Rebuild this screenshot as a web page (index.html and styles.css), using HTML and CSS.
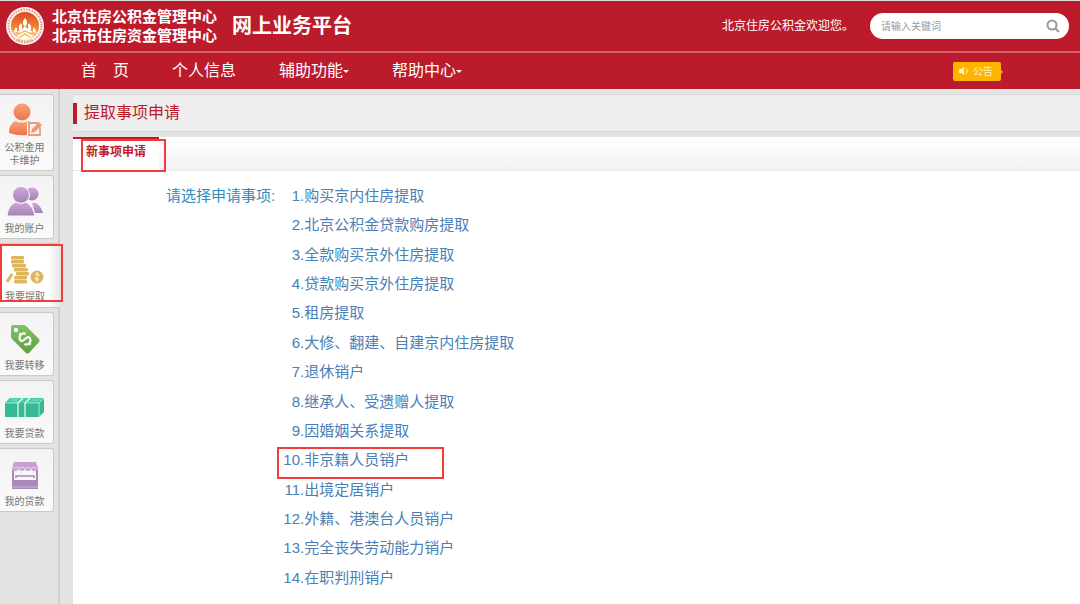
FILE: index.html
```
<!DOCTYPE html>
<html lang="zh-CN">
<head>
  <meta charset="UTF-8">
  <meta name="viewport" content="width=device-width, initial-scale=1.0">
  <title>网上业务平台</title>
  <link rel="stylesheet" href="styles.css">
</head>

<body>
  <header class="header">
    <a class="brand" href="#">
      <svg class="brand-logo" viewBox="0 0 40 40" aria-hidden="true">
        <defs>
          <linearGradient id="sun" x2="0" y2="1">
            <stop offset="0" stop-color="#dc4a22" />
            <stop offset="0.600" stop-color="#f08a35" />
            <stop offset="1" stop-color="#fff0cf" />
          </linearGradient>
        </defs>
        <circle cx="20" cy="20" r="19" fill="#fff3ec" />
        <circle cx="20" cy="20" r="16.500" fill="none" stroke="#dba098" stroke-width="2" stroke-dasharray="1.600 1.200" />
        <circle cx="20" cy="20" r="14" fill="url(#sun)" />
        <g fill="#fff">
          <path d="M20 12l2 3v3l-1 2h-2l-1-2v-3z" />
          <path d="M16 17l1 2v3l-1 2h-2v-4zM24 17l-1 2v3l1 2h2v-4z" />
          <path d="M11 21l1 2v3l-3 1v-2zM29 21l-1 2v3l3 1v-2z" />
          <path d="M20 20l3 3 5 3-4 1 4 3-8 4-8-4 4-3-4-1 5-3z" />
        </g>
        <path d="M14 28l6-3 6 3M15 31l5-3 5 3" fill="none" stroke="#f0b04a" stroke-width="1.200" />
        <path d="M13 34q7 3 14 0" fill="none" stroke="#dfb45c" stroke-width="2" stroke-dasharray="2 1" />
      </svg>
      <span class="brand-center">北京住房公积金管理中心<br>北京市住房资金管理中心</span>
      <span class="brand-title">网上业务平台</span>
    </a>
    <p class="welcome">北京住房公积金欢迎您。</p>
    <form class="search">
      <input type="search" name="keyword" placeholder="请输入关键词" aria-label="请输入关键词">
      <button type="submit" aria-label="搜索">
        <svg viewBox="0 0 14 14" aria-hidden="true">
          <circle cx="6" cy="6" r="4.500" />
          <path d="M9.500 9.500l3.500 3.500" />
        </svg>
      </button>
    </form>
  </header>

  <nav class="nav">
    <a href="#">首&emsp;页</a>
    <a href="#">个人信息</a>
    <button type="button" class="dropdown">辅助功能</button>
    <button type="button" class="dropdown">帮助中心</button>
    <a class="notice" href="#">
      <svg viewBox="0 0 12 10" aria-hidden="true">
        <path d="M1 3h2l3-2v8l-3-2h-2z" fill="#fff3c4" />
        <path d="M8 2q3 3 0 6" fill="none" stroke="#fff3c4" />
      </svg>
      公告
    </a>
  </nav>

  <div class="page">
    <aside class="sidebar">
      <a class="side-link tall" href="#">
        <svg viewBox="0 0 44 36" aria-hidden="true">
          <defs>
            <linearGradient id="orange" x2="0" y2="1">
              <stop offset="0" stop-color="#f9a27a" />
              <stop offset="1" stop-color="#ee7447" />
            </linearGradient>
          </defs>
          <circle cx="19" cy="10" r="8.500" fill="url(#orange)" />
          <path d="M6 31q0-9 6-12q7 3 14 0l1 1h-3v13q-10 1-18-2z" fill="url(#orange)" />
          <path d="M35 21h-9v12h11v-8" fill="none" stroke="#f09a78" stroke-width="1.800" />
          <path d="M28 31l1-4 7-7 3 3-7 7z" fill="#f09a78" />
        </svg>
        <span>公积金用<br>卡维护</span>
      </a>
      <a class="side-link" href="#">
        <svg viewBox="0 0 44 36" aria-hidden="true">
          <defs>
            <linearGradient id="purple" x2="0" y2="1">
              <stop offset="0" stop-color="#cfa6dc" />
              <stop offset="1" stop-color="#a283b2" />
            </linearGradient>
          </defs>
          <circle cx="29" cy="11" r="6.500" fill="url(#purple)" />
          <path d="M29 20h4q5 3 7 10h-8z" fill="url(#purple)" />
          <circle cx="18" cy="12" r="8.500" fill="url(#purple)" stroke="#f8f8f8" />
          <path d="M4 33q1-11 9-14q5 3 10 0q7 4 9 14z" fill="url(#purple)" stroke="#f8f8f8" />
        </svg>
        <span>我的账户</span>
      </a>
      <a class="side-link active" href="#">
        <svg viewBox="0 0 44 36" aria-hidden="true">
          <g fill="#deb65d">
            <rect x="8" y="5" width="13" height="3.600" rx="1" />
            <rect x="8" y="9" width="13" height="3.600" rx="1" />
            <rect x="9" y="13" width="14" height="3.600" rx="1" />
            <rect x="11" y="17" width="14" height="3.600" rx="1" />
            <rect x="13" y="21" width="13" height="3.600" rx="1" />
            <rect x="11" y="25" width="13" height="3.600" rx="1" />
            <rect x="11" y="29" width="13" height="3.600" rx="1" />
            <circle cx="34" cy="26" r="6.500" />
          </g>
          <path d="M4 31l5-8" stroke="#deb65d" stroke-width="3" />
          <path d="M32 24q2-2 4 0q0 1-2 2t-2 2h4M34 21v2M34 28v3" fill="none" stroke="#fff" />
        </svg>
        <span>我要提取</span>
      </a>
      <a class="side-link" href="#">
        <svg viewBox="0 0 44 36" aria-hidden="true">
          <defs>
            <linearGradient id="green" x2="0" y2="1">
              <stop offset="0" stop-color="#83c065" />
              <stop offset="1" stop-color="#5fa142" />
            </linearGradient>
          </defs>
          <path d="M8 7q0-2 2-2h10q2 0 3 1l13 13q1 2 0 3l-10 11q-1 1-3 0l-14-14q-1-1-1-3z" fill="url(#green)" />
          <circle cx="13" cy="10" r="2.200" fill="#f8f8f8" />
          <g transform="translate(22 19) rotate(-45)" fill="none" stroke="#f4fbef" stroke-width="2.200">
            <path d="M4-3q-1-3-4-3t-4 3t4 3t4 3t-4 3t-4-3" />
            <path d="M0-8v2M0 6v2" />
          </g>
        </svg>
        <span>我要转移</span>
      </a>
      <a class="side-link" href="#">
        <svg viewBox="0 0 44 36" aria-hidden="true">
          <path d="M2 15l5-5h34v14l-5 5h-34z" fill="#37b996" />
          <path d="M2 15l5-5h34l-5 5z" fill="#45d0ac" />
          <path d="M2 15h13M22 15h14l5-5M36 15v14" fill="none" stroke="#a7e6d3" />
          <path d="M15 29v-14l5-5M22 29v-14l5-5" fill="none" stroke="#f0fbf8" stroke-width="1.200" />
          <path d="M9 12h5M30 12h5" stroke="#9be8d2" stroke-dasharray="2 1" />
        </svg>
        <span>我要贷款</span>
      </a>
      <a class="side-link" href="#">
        <svg viewBox="0 0 44 36" aria-hidden="true">
          <path d="M9 14h2v10h22v-10h2v19h-26z" fill="#a88bb8" />
          <path d="M13 22v-2h18v2" fill="none" stroke="#a88bb8" stroke-width="1.600" />
          <path d="M9 31h26" stroke="#c9b4d3" />
          <path d="M11 6h22l2 6q0 3-3 3t-4-2q-1 2-3 2t-3-2q-1 2-3 2t-3-2q-1 2-4 2t-3-3z" fill="#c79fd2" />
          <path d="M10 11q2 3 5 0q2 3 5 0q2 3 5 0q2 3 5 0q2 3 4 0" fill="none" stroke="#f3e9f6" stroke-width="0.800" />
        </svg>
        <span>我的贷款</span>
      </a>
    </aside>

    <main class="main">
      <h1 class="page-title">提取事项申请</h1>
      <section class="panel">
        <div class="tabs">
          <a class="tab" href="#">新事项申请</a>
        </div>
        <div class="choices">
          <h2>请选择申请事项:</h2>
          <ol>
            <li><a href="#"><span>1.</span>购买京内住房提取</a></li>
            <li><a href="#"><span>2.</span>北京公积金贷款购房提取</a></li>
            <li><a href="#"><span>3.</span>全款购买京外住房提取</a></li>
            <li><a href="#"><span>4.</span>贷款购买京外住房提取</a></li>
            <li><a href="#"><span>5.</span>租房提取</a></li>
            <li><a href="#"><span>6.</span>大修、翻建、自建京内住房提取</a></li>
            <li><a href="#"><span>7.</span>退休销户</a></li>
            <li><a href="#"><span>8.</span>继承人、受遗赠人提取</a></li>
            <li><a href="#"><span>9.</span>因婚姻关系提取</a></li>
            <li><a class="marked" href="#"><span>10.</span>非京籍人员销户</a></li>
            <li><a href="#"><span>11.</span>出境定居销户</a></li>
            <li><a href="#"><span>12.</span>外籍、港澳台人员销户</a></li>
            <li><a href="#"><span>13.</span>完全丧失劳动能力销户</a></li>
            <li><a href="#"><span>14.</span>在职判刑销户</a></li>
          </ol>
        </div>
      </section>
    </main>
  </div>
</body>
</html>
```
FILE: styles.css
```
* {
  box-sizing: border-box;
  margin: 0;
  padding: 0;
}

body {
  display: flex;
  flex-direction: column;
  min-height: 100vh;
  background: #e3e3e3;
  border-top: 1px solid #dedede;
  font-family: "Liberation Sans", "Noto Sans CJK SC", sans-serif;
}

a {
  color: inherit;
  text-decoration: none;
}

button {
  border: none;
  background: none;
  color: inherit;
  font: inherit;
  cursor: pointer;
}

/* header */
.header {
  display: flex;
  align-items: center;
  height: 52px;
  padding: 0 11px 0 5px;
  background: #bc1b2c;
  border-bottom: 2px solid #cf626d;
  color: #fff;
}

.brand {
  display: flex;
  align-items: center;
}

.brand-logo {
  width: 40px;
  height: 40px;
}

.brand-center {
  margin-left: 7px;
  font-size: 15px;
  font-weight: 700;
  line-height: 19px;
}

.brand-title {
  margin-left: 15px;
  font-size: 20px;
  font-weight: 700;
  line-height: 24px;
}

.welcome {
  margin-left: auto;
  font-size: 12px;
  line-height: 16px;
}

.search {
  display: flex;
  align-items: center;
  width: 199px;
  height: 26px;
  margin-left: 16px;
  padding: 0 9px 0 11px;
  background: #fff;
  border-radius: 13px;
}

.search input {
  flex: 1;
  min-width: 0;
  border: none;
  outline: none;
  background: none;
  font-family: inherit;
  font-size: 10px;
}

.search input::placeholder {
  color: #999;
}

.search button {
  display: flex;
}

.search svg {
  width: 14px;
  height: 14px;
  fill: none;
  stroke: #999;
  stroke-width: 2;
}

/* navigation */
.nav {
  display: flex;
  align-items: center;
  gap: 43px;
  height: 36px;
  padding: 0 79px 0 81px;
  background: #bc1b2c;
  color: #fff;
  font-size: 16px;
  line-height: 24px;
}

.dropdown {
  display: flex;
  align-items: center;
}

.dropdown::after {
  content: "";
  border: 3px solid transparent;
  border-top-color: #fff;
  border-bottom: none;
}

.notice {
  position: relative;
  display: flex;
  align-items: center;
  gap: 3px;
  margin-left: auto;
  padding: 0 8px 0 5px;
  background: #ffb400;
  border-radius: 2px;
  color: #fff3c4;
  font-size: 10px;
  line-height: 19px;
}

.notice svg {
  width: 12px;
  height: 10px;
}

.notice::after {
  content: "";
  position: absolute;
  top: 8px;
  left: 100%;
  border: 2px solid transparent;
  border-left-color: #ffb400;
}

/* sidebar */
.page {
  display: flex;
  flex: 1;
}

.sidebar {
  display: flex;
  flex-direction: column;
  gap: 4px;
  width: 60px;
  padding-top: 5px;
  border-right: 2px solid #cfcfcf;
}

.side-link {
  display: flex;
  flex-direction: column;
  align-items: center;
  gap: 3px;
  width: 54px;
  height: 64px;
  padding: 7px 4px 0 0;
  background: linear-gradient(#f3f3f3, #fafafa);
  border: 1px solid #c9c9c9;
  border-left: none;
  border-radius: 0 3px 3px 0;
  color: #777;
  font-size: 10px;
  line-height: 13px;
  text-align: center;
}

.side-link svg {
  flex: none;
  width: 44px;
  height: 36px;
}

.side-link.tall {
  height: 77px;
}

.side-link.active {
  position: relative;
  width: 60px;
  height: 65px;
  padding-right: 10px;
  background: linear-gradient(to right, #fff 80%, #e8e8e8);
  border-right: none;
  border-radius: 0;
}

/* red frames around the current choices */
.side-link.active::after,
.tab::after,
.marked::after {
  content: "";
  position: absolute;
  border: 2px solid #f33b3b;
}

.side-link.active::after {
  inset: 0 -3px 5px 0;
}

/* main */
.main {
  display: flex;
  flex: 1;
  flex-direction: column;
  gap: 5px;
  padding: 5px 0 0 13px;
}

.page-title {
  display: flex;
  align-items: center;
  gap: 7px;
  height: 38px;
  background: #eee;
  border: 1px solid #dadada;
  border-width: 1px 0;
  color: #bc1b2c;
  font-size: 16px;
  font-weight: 400;
  line-height: 20px;
}

.page-title::before {
  content: "";
  width: 4px;
  height: 21px;
  background: #bc1b2c;
}

.panel {
  flex: 1;
  background: #fff;
}

.tabs {
  display: flex;
  height: 34px;
  background: linear-gradient(#fff, #f2f2f6);
  border-bottom: 1px solid #e6e6e6;
}

.tab {
  position: relative;
  width: 86px;
  padding: 4px 0 0 13px;
  background: #fff;
  border-top: 2px solid #bc1b2c;
  color: #bc1b2c;
  font-size: 12px;
  font-weight: 700;
  line-height: 18px;
}

.tab::after {
  inset: 0 -7px -2px 8px;
}

.choices {
  display: flex;
  gap: 2px;
  padding: 10px 20px 12px 93px;
  font-size: 15px;
  line-height: 29px;
}

.choices h2 {
  color: #2b8cbe;
  font-size: 15px;
  font-weight: 400;
}

.choices ol {
  display: grid;
  grid-auto-rows: 1fr;
  min-height: 411px;
  color: #4a80b5;
  list-style: none;
}

.choices a {
  position: relative;
  display: inline-block;
}

.choices span {
  display: inline-block;
  width: 27px;
  text-align: right;
}

.marked::after {
  inset: 2px -35px -5px 0;
}
```
